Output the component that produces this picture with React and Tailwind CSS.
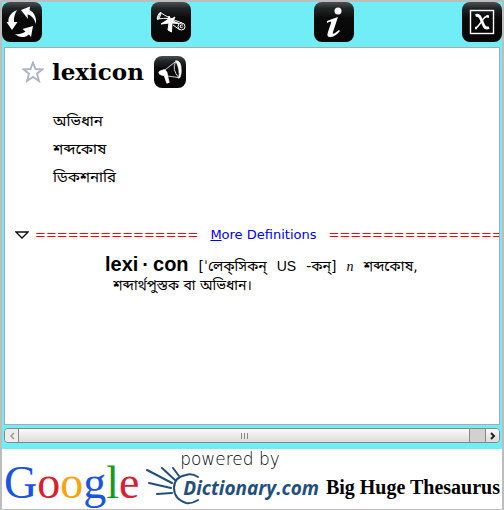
import React from "react";

const BENGALI = "font-['DejaVu_Sans','Noto_Sans_Bengali','Noto_Sans',sans-serif]";

function Tile({ label, small, children }) {
  return (
    <button
      type="button"
      aria-label={label}
      className={`${small ? "size-8" : "size-10"} shrink-0 overflow-hidden rounded-lg bg-[linear-gradient(#4c5052_0%,#222526_16%,#0a0b0b_40%,#070506_100%)]`}
    >
      <svg viewBox="0 0 40 40" className="size-full" fill="none">
        {children}
      </svg>
    </button>
  );
}

function RecycleIcon() {
  return (
    <g fill="#fff">
      <path d="M15 8 C8 11 6 16 6.500 20 L4.500 20 L10 28 L15.500 20 L12 20 C11.500 15 13 12 15 8Z" />
      <path d="M19 8 L28 4.500 L27.500 8 C33 11 34.500 16 34 22 C32 16 29 13 25.500 12.500 L26 17Z" />
      <path d="M13 32 C17 36 23 36 27 32.500 L29 35 L31 24 L20.500 27 L23.500 29.500 C20 32 16 32.500 13 32Z" />
    </g>
  );
}

function ScrollIcon() {
  return (
    <g stroke="#fff" strokeWidth="1" strokeLinejoin="round">
      <path d="M6.500 17 L9.500 10.500 Q17 16 31 21 M6.500 17 Q13 16 18 16.500 M22 23 L29 28" />
      <ellipse cx="8" cy="14" rx="1" ry="3.500" transform="rotate(25 8 14)" />
      <circle cx="30.500" cy="24.500" r="3.500" />
      <path d="M32 23 Q29 22 29 25 Q31 27 32 24.500" />
      <path d="M18 14 L19.500 17.500 L24 15 L22 19 L28 21.500 L21 21 L20.500 30 L17 28 L18 21 L10 22 L17 17.500Z" fill="#fff" />
    </g>
  );
}

function InfoIcon() {
  return (
    <g fill="#fff">
      <circle cx="24" cy="9" r="3.500" />
      <path d="M13 19 Q18 17 24 15 L19 30 Q18 33 21 31 L25 28 L26 29 Q21 35 16 35 Q12 35 14 30 L17 21 Q18 18 13 21Z" />
    </g>
  );
}

function CloseIcon() {
  return (
    <g stroke="#fff">
      <rect x="8.500" y="8.500" width="23" height="23" strokeWidth="1.400" />
      <path d="M13.500 13.500 Q17 12.500 18.500 16 L22 24 Q23.500 27 27 25.500" strokeWidth="2.800" />
      <path d="M26 14 Q23 14 20 19 L17 23 Q15 26 13 26" strokeWidth="1.500" />
      <path d="M24.500 14.500h2.500M13 26h2" strokeWidth="2.400" />
    </g>
  );
}

function MegaphoneIcon() {
  return (
    <g stroke="#fff" strokeWidth="1" strokeLinejoin="round">
      <path d="M13 18 L27 7 M17 25 L31 27 M27 7 Q22 17 31 27" />
      <path d="M27 6 Q34 5 34 18 Q34 26 31 28 Q33 16 27 6Z" fill="#fff" />
      <path d="M13 17 Q17 19 17 25 L10 24 Q4 22 7 19Z" fill="#fff" />
      <path d="M13 25 L17 25 L19 33 L16 34Z" fill="#fff" />
    </g>
  );
}

function DictionaryMark() {
  return (
    <svg viewBox="0 0 56 40" className="h-10 w-14" fill="none" stroke="#234f7c" strokeWidth="2" strokeLinecap="round">
      <path d="M1 4 L26 17 M16 2 L29 14 M27 2 L33 10 M3 17 L25 22 M11 28 L26 27" />
      <path d="M52 11 Q46 7 40 9 Q28 11 28 22 Q28 33 40 37 Q46 38 52 34" />
    </svg>
  );
}

export default function App() {
  return (
    <div className="flex h-screen flex-col border-t-2 border-r-2 border-b border-l-2 border-[#bdbdbd] bg-[#70edf5] font-['DejaVu_Sans',sans-serif] text-black">
      <header className="flex justify-between">
        <Tile label="Refresh"><RecycleIcon /></Tile>
        <div className="flex flex-1 justify-center gap-[123px]">
          <Tile label="Dictionary"><ScrollIcon /></Tile>
          <Tile label="Information"><InfoIcon /></Tile>
        </div>
        <Tile label="Close"><CloseIcon /></Tile>
      </header>

      <main className="mx-0.5 mt-[5px] min-h-0 flex-1 overflow-hidden border border-[#aaa] bg-white">
        <div className="flex h-12 items-center pl-[17px]">
          <button type="button" aria-label="Add to favourites" className="size-[22px]">
            <svg viewBox="0 0 22 22" className="size-full" fill="#fff" stroke="#adb3c9" strokeWidth="1.900">
              <path d="M11 1.500 L13.500 8 L20.500 8.300 L15 12.700 L17 20 L11 16 L5 20 L7 12.700 L1.500 8.300 L8.500 8Z" />
            </svg>
          </button>
          <h1 className="mr-2.5 ml-2 font-['DejaVu_Serif',serif] text-[23px] leading-8 font-bold">lexicon</h1>
          <Tile label="Pronounce" small><MegaphoneIcon /></Tile>
        </div>

        <ul className={`mt-[11px] pl-12 text-[15px] leading-7 ${BENGALI}`}>
          <li>অভিধান</li>
          <li>শব্দকোষ</li>
          <li>ডিকশনারি</li>
        </ul>

        <div className="mt-8 flex items-center pl-2.5 text-[13px] leading-6 whitespace-nowrap">
          <svg viewBox="0 0 14 8" className="mr-1.5 h-2 w-3.5 shrink-0" fill="#fff" stroke="#111" strokeWidth="1.300">
            <path d="M1 1 H13 L7 7Z" />
          </svg>
          <span className="text-[#f00]">===============</span>
          <a href="#definitions" className="mx-3 text-[#00f]">
            <span className="underline">M</span>ore Definitions
          </a>
          <span className="text-[#f00]">================</span>
        </div>

        <section id="definitions" className={`mt-2 pl-[108px] text-sm leading-[18px] whitespace-nowrap ${BENGALI}`}>
          <p className="-ml-2 flex items-baseline gap-2.5">
            <b className="flex gap-1 font-['Liberation_Sans',sans-serif] text-xl leading-[18px]">
              <span>lexi</span><span>·</span><span>con</span>
            </b>
            <span>[ˈলেক্‌সিকন্</span>
            <span className="font-['Liberation_Sans',sans-serif]">US</span>
            <span>-কন্]</span>
            <i className="font-['Liberation_Serif',serif]">n</i>
            <span>শব্দকোষ,</span>
          </p>
          <p>শব্দার্থপুস্তক বা অভিধান।</p>
        </section>
      </main>

      <div className="mx-0.5 mt-[3px] mb-1.5 flex h-[15px] shrink-0 overflow-hidden rounded-sm border border-[#888] bg-[#d2d1cf]">
        <button type="button" aria-label="Scroll left" className="flex w-3.5 items-center justify-center border-r border-[#888] bg-[#eeedeb]">
          <svg viewBox="0 0 6 8" className="h-2 w-1.5" fill="none" stroke="#999" strokeWidth="1.500"><path d="M5 1 L2 4 L5 7" /></svg>
        </button>
        <div className="flex flex-1 items-center justify-center gap-0.5 border-r border-[#888] bg-linear-to-b from-[#fafafa] to-[#dddcd8]">
          <span className="h-1.5 w-px bg-[#888]" />
          <span className="h-1.5 w-px bg-[#888]" />
          <span className="h-1.5 w-px bg-[#888]" />
        </div>
        <div className="w-[15px]" />
        <button type="button" aria-label="Scroll right" className="flex w-3.5 items-center justify-center border-l border-[#888] bg-linear-to-b from-[#fafafa] to-[#dddcd8]">
          <svg viewBox="0 0 6 8" className="h-2 w-1.5" fill="none" stroke="#222" strokeWidth="2"><path d="M1 1 L4 4 L1 7" /></svg>
        </button>
      </div>

      <footer className="h-[60px] shrink-0 bg-white whitespace-nowrap">
        <p className="pt-1 pr-11 text-center font-['DejaVu_Sans',sans-serif] text-[17px] leading-3 font-extralight text-black">powered by</p>
        <div className="flex h-9 items-center justify-between px-0.5">
          <span className="font-['Liberation_Serif',serif] text-[46px] leading-9">
            <span className="text-[#1b54e3]">G</span>
            <span className="text-[#d9202f]">o</span>
            <span className="text-[#f5a40a]">o</span>
            <span className="text-[#1b54e3]">g</span>
            <span className="text-[#129b22]">l</span>
            <span className="text-[#d9202f]">e</span>
          </span>
          <span className="flex items-center pt-1.5">
            <DictionaryMark />
            <span className="-ml-[19px] pt-1 font-['Open_Sans',sans-serif] text-[19px] leading-8 font-bold text-[#234f7c] italic">Dictionary.com</span>
          </span>
          <span className="pt-2 font-['Liberation_Serif',serif] text-xl leading-8 font-bold">Big Huge Thesaurus</span>
        </div>
      </footer>
    </div>
  );
}
